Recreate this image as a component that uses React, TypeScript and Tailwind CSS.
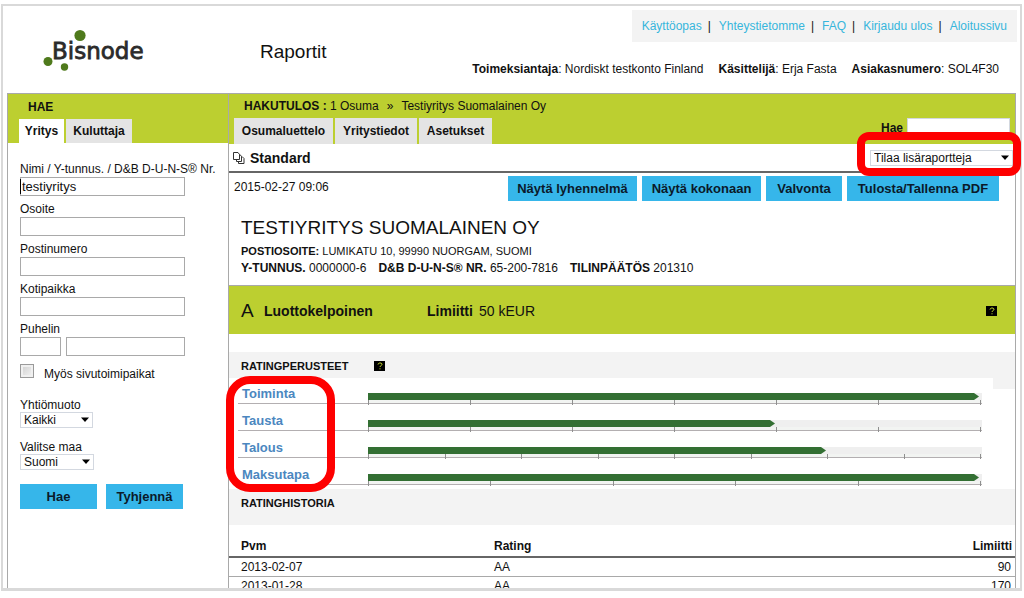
import type { ReactNode } from "react";
import { clsx } from "clsx";

const topLinks = ["Käyttöopas", "Yhteystietomme", "FAQ", "Kirjaudu ulos", "Aloitussivu"];

const ratings = [
  { label: "Toiminta", steps: 6, filled: 6 },
  { label: "Tausta", steps: 6, filled: 4 },
  { label: "Talous", steps: 8, filled: 6 },
  { label: "Maksutapa", steps: 5, filled: 5 },
];

const history = [
  { date: "2013-02-07", rating: "AA", limit: "90" },
  { date: "2013-01-28", rating: "AA", limit: "170" },
];

function Logo() {
  return (
    <svg className="h-[44px] w-[104px]" viewBox="0 0 104 44" role="img" aria-label="Bisnode">
      <circle cx="38" cy="6.500" r="5.600" fill="#4f7a1c" />
      <circle cx="6" cy="32.500" r="4.500" fill="#4f7a1c" />
      <circle cx="22.500" cy="38" r="3.700" fill="#4f7a1c" />
      <text
        x="10"
        y="30"
        fontFamily="'DejaVu Sans', Verdana, sans-serif"
        fontSize="23"
        fill="#2b2b2b"
        stroke="#2b2b2b"
        strokeWidth="0.8"
      >
        Bisnode
      </text>
    </svg>
  );
}

function BlueButton({ children, className }: { children: ReactNode; className?: string }) {
  return (
    <button
      type="button"
      className={clsx("h-[25px] bg-[#36b6ea] text-[13px] font-bold whitespace-nowrap text-[#0b1a2a]", className)}
    >
      {children}
    </button>
  );
}

function Tab({ children, active, className }: { children: ReactNode; active?: boolean; className?: string }) {
  return (
    <button
      type="button"
      className={clsx("text-xs font-bold whitespace-nowrap", active ? "bg-white" : "bg-[#e4e4e4]", className)}
    >
      {children}
    </button>
  );
}

function DropDown({ id, value, className }: { id: string; value: string; className?: string }) {
  return (
    <div className={clsx("relative h-4", className)}>
      <select
        id={id}
        aria-label={value}
        className="block h-full w-full appearance-none border border-[#d3d8e0] bg-white px-[3px] text-xs leading-[14px]"
      >
        <option>{value}</option>
      </select>
      <svg className="pointer-events-none absolute top-[5px] right-1 h-[5px] w-2" viewBox="0 0 8 5">
        <path d="M0 0.500H8L4 5Z" fill="#000" />
      </svg>
    </div>
  );
}

function Field({ id, label, value, caret }: { id: string; label: string; value?: string; caret?: boolean }) {
  return (
    <div>
      <label htmlFor={id} className="block h-4 leading-4 whitespace-nowrap">
        {label}
      </label>
      <div className="relative">
        <input
          id={id}
          defaultValue={value}
          className="block h-[19px] w-[165px] border border-[#a9a9a9] bg-white px-px text-[13px]"
        />
        {caret && <span className="absolute top-[2px] left-0 h-[15px] w-px bg-black" />}
      </div>
    </div>
  );
}

function HelpIcon() {
  return (
    <button
      type="button"
      aria-label="Ohje"
      className="flex h-[10px] w-[11px] items-center justify-center bg-black"
    >
      <svg className="h-2 w-2" viewBox="0 0 8 8" fill="none" stroke="#c4d82e" strokeWidth="1">
        <path d="M2 2.500C2.200 0.500 6 0.500 6 2.300C6 3.700 4 3.500 4 5M4 6.300V7.300" />
      </svg>
    </button>
  );
}

function PagesIcon() {
  return (
    <svg className="h-3 w-3" viewBox="0 0 12 12" fill="#fff" stroke="#333" strokeWidth="1">
      <path d="M5.500 4.500H9L11 6.500V11.500H5.500Z" />
      <path d="M3.500 2.500H7L8.500 4.500V9.500H3.500Z" />
      <path d="M0.500 0.500H5L6.500 2.500V7.500H0.500Z" />
    </svg>
  );
}

function RatingBar({ steps, filled }: { steps: number; filled: number }) {
  const width = 612;
  const end = (width * filled) / steps - 1;
  const ticks = Array.from({ length: steps + 1 }, (_, i) => Math.round((i * width) / steps) + 0.5);
  return (
    <svg className="block h-3 w-full" viewBox="0 0 614 12" preserveAspectRatio="none">
      <rect x="0" y="0" width="614" height="7" fill="#efefef" />
      <rect x="0" y="7" width="614" height="3" fill="#f2f4f2" />
      <path d={`M0 0H${end - 5}L${end} 3.500L${end - 5} 7H0Z`} fill="#336f33" />
      <path d="M0 10.500H614" stroke="#b3afb1" />
      {ticks.map((x) => (
        <path key={x} d={`M${x} 7V12`} stroke="#8f8f8f" />
      ))}
    </svg>
  );
}

function Sidebar() {
  return (
    <aside className="w-[222px] shrink-0 border-x border-t border-[#a9a9a9]">
      <div className="flex h-[49px] flex-col justify-between bg-[#bccf30] pl-[11px]">
        <h2 className="pt-[5px] pl-[9px] leading-4 font-bold">HAE</h2>
        <div className="flex gap-[2px]">
          <Tab active className="h-6 w-[45px]">
            Yritys
          </Tab>
          <Tab className="h-6 w-[66px]">Kuluttaja</Tab>
        </div>
      </div>
      <form className="pt-[18px] pl-3">
        <div className="flex flex-col gap-[5px]">
          <Field id="name" label="Nimi / Y-tunnus. / D&B D-U-N-S® Nr." value="testiyritys" caret />
          <Field id="address" label="Osoite" />
          <Field id="zip" label="Postinumero" />
          <Field id="city" label="Kotipaikka" />
          <div>
            <label htmlFor="area" className="block h-4 leading-4">
              Puhelin
            </label>
            <div className="flex gap-[5px]">
              <input id="area" className="h-[19px] w-[41px] border border-[#a9a9a9]" />
              <input aria-label="Puhelinnumero" className="h-[19px] w-[119px] border border-[#a9a9a9]" />
            </div>
          </div>
        </div>
        <div className="mt-2 flex h-5 gap-[10px]">
          <input
            id="branches"
            type="checkbox"
            className="h-[14px] w-[14px] appearance-none border border-[#9a9a9a] bg-linear-to-br from-[#cfcfcf] to-[#f4f4f4] outline-2 -outline-offset-3 outline-[#f0f0f0]"
          />
          <label htmlFor="branches" className="leading-5">
            Myös sivutoimipaikat
          </label>
        </div>
        <label htmlFor="form" className="mt-[13px] block h-[15px] leading-4">
          Yhtiömuoto
        </label>
        <DropDown id="form" value="Kaikki" className="w-[73px]" />
        <label htmlFor="country" className="mt-[11px] block h-[15px] leading-4">
          Valitse maa
        </label>
        <DropDown id="country" value="Suomi" className="w-[74px]" />
        <div className="mt-[14px] flex gap-[9px]">
          <BlueButton className="w-[77px]">Hae</BlueButton>
          <BlueButton className="w-[77px]">Tyhjennä</BlueButton>
        </div>
      </form>
    </aside>
  );
}

function ResultHeader() {
  return (
    <div className="flex h-[50px] justify-between bg-[#bccf30] pr-[5px] pl-[5px]">
      <div className="flex flex-col justify-between">
        <p className="flex gap-2 pt-[4px] pl-[10px] leading-4">
          <span>
            <b>HAKUTULOS :</b> 1 Osuma
          </span>
          <span>»</span>
          <span>Testiyritys Suomalainen Oy</span>
        </p>
        <div className="flex gap-[2px]">
          <Tab className="h-[26px] w-[99px]">Osumaluettelo</Tab>
          <Tab className="h-[26px] w-[82px]">Yritystiedot</Tab>
          <Tab className="h-[26px] w-[73px]">Asetukset</Tab>
        </div>
      </div>
      <div className="flex items-end gap-1 pb-2">
        <label htmlFor="search" className="leading-4 font-bold">
          Hae
        </label>
        <input id="search" className="h-[18px] w-[103px] border border-[#d3d8e0] bg-white" />
      </div>
    </div>
  );
}

function Company() {
  return (
    <div className="pt-[15px] pb-[9px] pl-3">
      <h1 className="text-[19px] leading-6">TESTIYRITYS SUOMALAINEN OY</h1>
      <p className="mt-[3px] text-[11px] leading-4">
        <b>POSTIOSOITE:</b> LUMIKATU 10, 99990 NUORGAM, SUOMI
      </p>
      <p className="mt-px flex gap-3 leading-4">
        <span>
          <b>Y-TUNNUS.</b> 0000000-6
        </span>
        <span>
          <b>D&B D-U-N-S® NR.</b> 65-200-7816
        </span>
        <span>
          <b>TILINPÄÄTÖS</b> 201310
        </span>
      </p>
    </div>
  );
}

function Ratings() {
  return (
    <>
      <div className="mt-[18px] flex h-[26px] items-center bg-[#f3f3f3] pt-[2px] pl-3">
        <h2 className="w-[133px] text-[11px] font-bold">RATINGPERUSTEET</h2>
        <HelpIcon />
      </div>
      <div className="relative flex h-[111px]">
        <div className="flex flex-1 flex-col pt-[8px] pr-[11px] pl-[9px]">
          {ratings.map((r) => (
            <div key={r.label} className="flex h-[27px] shrink-0">
              <a
                href="#"
                className="h-[18px] w-[130px] border-b border-[#b3afb1] pl-1 text-[13px] leading-4 font-bold text-[#4b87bf]"
              >
                {r.label}
              </a>
              <div className="flex-1 pt-[7px]">
                <RatingBar steps={r.steps} filled={r.filled} />
              </div>
            </div>
          ))}
        </div>
        <div className="h-[11px] w-[22px] bg-[#f3f3f3]" />
        <div className="pointer-events-none absolute -top-[2px] -left-[3px] h-[116px] w-[109px] rounded-3xl border-8 border-[#fe0000]" />
      </div>
    </>
  );
}

function Results() {
  return (
    <main className="min-w-0 flex-1 border-t border-r border-[#a9a9a9]">
      <ResultHeader />
      <div className="flex h-[29px] items-center justify-between border-b-2 border-[#666] pr-[2px] pl-1">
        <h2 className="flex items-center gap-[5px] text-sm font-bold">
          <PagesIcon />
          Standard
        </h2>
        <div className="relative">
          <DropDown id="reports" value="Tilaa lisäraportteja" className="w-[143px]" />
          <div className="pointer-events-none absolute -top-[18px] -right-2 -left-[13px] h-[44px] rounded-xl border-8 border-[#fe0000]" />
        </div>
      </div>
      <div className="flex items-start justify-between pt-[3px] pr-4 pl-[5px]">
        <time className="pt-[3px] leading-4">2015-02-27 09:06</time>
        <div className="flex gap-[5px]">
          <BlueButton className="w-[129px]">Näytä lyhennelmä</BlueButton>
          <BlueButton className="w-[119px]">Näytä kokonaan</BlueButton>
          <BlueButton className="w-[76px]">Valvonta</BlueButton>
          <BlueButton className="w-[152px]">Tulosta/Tallenna PDF</BlueButton>
        </div>
      </div>
      <Company />
      <div className="flex h-[49px] items-center border-t border-[#a9a9a9] bg-[#bccf30] pt-[2px] pr-[18px] pl-3 text-sm">
        <span className="w-[23px] text-[19px]">A</span>
        <b className="w-[163px]">Luottokelpoinen</b>
        <b className="w-[52px]">Limiitti</b>
        <span className="flex-1">50 kEUR</span>
        <HelpIcon />
      </div>
      <Ratings />
      <h2 className="h-9 bg-[#f3f3f3] pt-[6px] pl-3 text-[11px] leading-4 font-bold">RATINGHISTORIA</h2>
      <table className="mt-[10px] w-full table-fixed">
        <thead>
          <tr className="h-[22px] border-b-2 border-[#666]">
            <th className="w-[265px] pl-3 text-left">Pvm</th>
            <th className="text-left">Rating</th>
            <th className="pr-[3px] text-right">Limiitti</th>
          </tr>
        </thead>
        <tbody>
          {history.map((h) => (
            <tr key={h.date} className="h-[19px] border-b border-[#a9a9a9] leading-4">
              <td className="pl-3">{h.date}</td>
              <td>{h.rating}</td>
              <td className="pr-1 text-right">{h.limit}</td>
            </tr>
          ))}
        </tbody>
      </table>
    </main>
  );
}

export default function App() {
  return (
    <div className="h-screen bg-white pt-1 pr-[2px] pb-[7px] pl-px font-['Liberation_Sans',Arial,sans-serif] text-xs text-[#111]">
      <div className="flex h-full flex-col overflow-y-clip border-2 border-b-3 border-[#d9d9d9]">
        <header className="flex h-[87px] shrink-0 pt-1 pr-[3px] pl-[39px]">
          <div className="w-[218px] pt-[19px]">
            <Logo />
          </div>
          <div className="pt-[30px] text-[19px] leading-6">Raportit</div>
          <div className="flex flex-1 flex-col items-end">
            <nav className="flex h-8 items-center gap-2 bg-[#f3f3f3] px-[10px]">
              {topLinks.map((link, i) => (
                <span key={link} className="flex gap-[6px]">
                  <a href="#" className="text-[#36b6dc]">
                    {link}
                  </a>
                  {i < topLinks.length - 1 && <span>|</span>}
                </span>
              ))}
            </nav>
            <p className="flex gap-[15px] pt-[19px] pr-[18px] leading-4">
              <span>
                <b>Toimeksiantaja</b>: Nordiskt testkonto Finland
              </span>
              <span>
                <b>Käsittelijä</b>: Erja Fasta
              </span>
              <span>
                <b>Asiakasnumero</b>: SOL4F30
              </span>
            </p>
          </div>
        </header>
        <div className="flex min-h-0 flex-1 pr-1 pl-1">
          <Sidebar />
          <Results />
        </div>
      </div>
    </div>
  );
}
